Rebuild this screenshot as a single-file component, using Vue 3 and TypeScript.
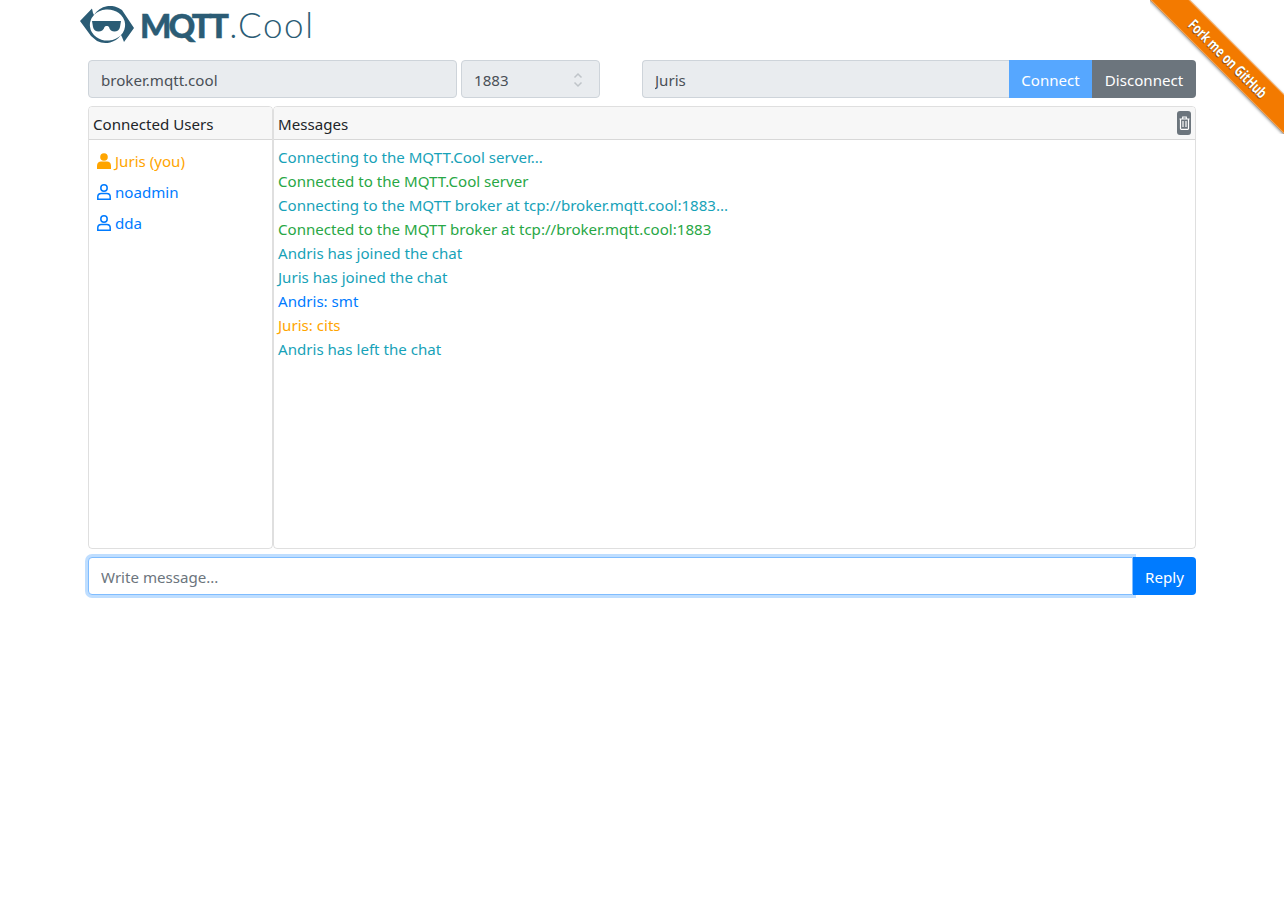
<script setup lang="ts">
interface Line { text: string; kind: string }
interface User { name: string; self: boolean }

const users: User[] = [
  { name: 'Juris (you)', self: true },
  { name: 'noadmin', self: false },
  { name: 'dda', self: false },
]
const lines: Line[] = [
  { text: 'Connecting to the MQTT.Cool server...', kind: 'info' },
  { text: 'Connected to the MQTT.Cool server', kind: 'ok' },
  { text: 'Connecting to the MQTT broker at tcp://broker.mqtt.cool:1883...', kind: 'info' },
  { text: 'Connected to the MQTT broker at tcp://broker.mqtt.cool:1883', kind: 'ok' },
  { text: 'Andris has joined the chat', kind: 'info' },
  { text: 'Juris has joined the chat', kind: 'info' },
  { text: 'Andris: smt', kind: 'other' },
  { text: 'Juris: cits', kind: 'self' },
  { text: 'Andris has left the chat', kind: 'info' },
]
</script>

<template>
  <div class="page">
    <header class="logo">
      <svg class="mark" width="56" height="40" viewBox="80 6 56 40" aria-hidden="true">
        <path fill="#2b5c75" d="M80 21 L92 8.500 L93 13 L94 15 A17.500 15.500 0 0 0 121 35 A19 19 0 0 1 97 41 L91 36 Z" />
        <path fill="#2b5c75" d="M134 28 L124 42 L122 37 L121 35 A17.500 15.500 0 0 0 94 15 A19 19 0 0 1 122 10 Z" />
        <path fill="#2b5c75" d="M92 21 H121 L120 27 C119 33 110 33 109 27 C108.500 25.500 105 25.500 104.500 27 C103 33 94 33 93 27 Z" />
      </svg>
      <span class="brand"><b>MQTT</b><i>.Cool</i></span>
    </header>

    <div class="connection">
      <input class="field host" disabled value="broker.mqtt.cool" />
      <div class="field port">
        <span>1883</span>
        <svg width="10" height="16" viewBox="0 0 10 16" aria-hidden="true">
          <path d="M1.500 5.500 L5 2 L8.500 5.500 M1.500 10.500 L5 14 L8.500 10.500" fill="none" stroke="#bfc4c9" stroke-width="1.500" />
        </svg>
      </div>
      <div class="who">
        <input class="field name" disabled value="Juris" />
        <button class="btn connect" disabled>Connect</button>
        <button class="btn disconnect">Disconnect</button>
      </div>
    </div>

    <div class="panels">
      <section class="card users">
        <div class="card-head"><span>Connected Users</span></div>
        <ul class="user-list">
          <li v-for="u in users" :key="u.name" :class="u.self ? 'me' : 'peer'">
            <svg width="14" height="16" viewBox="0 0 14 16" aria-hidden="true">
              <template v-if="u.self">
                <circle cx="7" cy="4" r="3.800" fill="currentColor" />
                <path d="M0 16 V12.500 C0 10 2 8.500 4 8.500 H10 C12 8.500 14 10 14 12.500 V16 Z" fill="currentColor" />
              </template>
              <template v-else>
                <circle cx="7" cy="4" r="3.200" fill="none" stroke="currentColor" stroke-width="1.500" />
                <path d="M.8 15.200 V12.800 C.8 10.800 2.200 9.400 4.200 9.400 H9.800 C11.800 9.400 13.200 10.800 13.200 12.800 V15.200 Z" fill="none" stroke="currentColor" stroke-width="1.500" />
              </template>
            </svg>
            <span>{{ u.name }}</span>
          </li>
        </ul>
      </section>

      <section class="card messages">
        <div class="card-head">
          <span>Messages</span>
          <button class="trash" aria-label="Clear">
            <svg width="11" height="14" viewBox="0 0 11 14" aria-hidden="true">
              <path d="M.5 3 H10.500 M3.700 3 V1 H7.300 V3 M1.500 3 V12.500 Q1.500 13.300 2.300 13.300 H8.700 Q9.500 13.300 9.500 12.500 V3 M4 5 V11 M7 5 V11" fill="none" stroke="#fff" stroke-width="1.200" />
            </svg>
          </button>
        </div>
        <div class="log">
          <div v-for="(l, i) in lines" :key="i" :class="l.kind">{{ l.text }}</div>
        </div>
      </section>
    </div>

    <div class="composer">
      <input class="message" placeholder="Write message..." />
      <button class="btn reply">Reply</button>
    </div>

    <div class="ribbon-wrap">
      <a class="ribbon"><span>Fork me on GitHub</span></a>
    </div>
  </div>
</template>

<style>
html, body { background: #fff; }
</style>

<style scoped>
.page {
  position: relative;
  width: 1284px;
  height: 920px;
  overflow: hidden;
  box-sizing: border-box;
  padding: 0 88px;
  font-family: "Noto Sans", "Open Sans", "Liberation Sans", sans-serif;
  font-size: 15.1px;
  color: #212529;
}
.logo {
  display: flex;
  align-items: center;
  height: 52px;
  margin-left: -8px;
  gap: 4px;
  box-sizing: border-box;
}
.mark { flex: none; }
.brand {
  font-family: Lato, sans-serif;
  font-size: 33px;
  line-height: 36px;
  color: #2b5c75;
  white-space: nowrap;
  margin-bottom: 4px;
}
.brand b {
  font-weight: 900;
  letter-spacing: -2.800px;
  -webkit-text-stroke: .5px #2b5c75;
}
.brand i {
  font-size: 35px;
  font-style: normal;
  font-weight: 300;
  letter-spacing: 1.600px;
  margin-left: 3px;
}

.connection {
  display: flex;
  height: 38px;
  margin-top: 8px;
  gap: 4px;
}
.field {
  box-sizing: border-box;
  height: 38px;
  padding: 1px 12px 0;
  border: 1px solid #ced4da;
  border-radius: 4px;
  background: #e9ecef;
  color: #495057;
  font: inherit;
  opacity: 1;
  -webkit-text-fill-color: #495057;
}
.host { width: 369px; }
.port {
  width: 139px;
  display: flex;
  align-items: center;
  justify-content: space-between;
  padding-right: 16px;
}
.who {
  display: flex;
  width: 554px;
  margin-left: 38px;
}
.name {
  width: 367px;
  border-top-right-radius: 0;
  border-bottom-right-radius: 0;
  border-right: 0;
}
.btn {
  box-sizing: border-box;
  height: 38px;
  border: 0;
  padding: 1px 0 0;
  color: #fff;
  font: inherit;
}
.connect {
  width: 83px;
  background: #56a7ff;
}
.disconnect {
  width: 104px;
  background: #6c757d;
  border-radius: 0 4px 4px 0;
}

.panels {
  display: flex;
  height: 443px;
  margin-top: 8px;
}
.card {
  box-sizing: border-box;
  border: 1px solid rgba(0, 0, 0, .125);
  border-radius: 4px;
  display: flex;
  flex-direction: column;
  min-width: 0;
}
.users { width: 185px; flex: none; }
.messages { flex: 1; }
.card-head {
  display: flex;
  align-items: center;
  justify-content: space-between;
  box-sizing: border-box;
  height: 33px;
  flex: none;
  padding: 0 4px;
  background: #f7f7f7;
  border-bottom: 1px solid rgba(0, 0, 0, .125);
  border-radius: 3px 3px 0 0;
  color: #212529;
}
.card-head > span { padding-top: 2px; }
.trash {
  display: flex;
  align-items: center;
  justify-content: center;
  width: 14px;
  height: 24px;
  padding: 0;
  border: 0;
  border-radius: 3px;
  background: #6c757d;
}
.user-list {
  list-style: none;
  margin: 0;
  padding: 5px 8px;
}
.user-list li {
  display: flex;
  align-items: center;
  gap: 4px;
  height: 31px;
}
.me { color: #ffa500; }
.peer { color: #007bff; }
.log {
  padding: 5px 4px;
  line-height: 24px;
}
.info { color: #17a2b8; }
.ok { color: #28a745; }
.other { color: #007bff; }
.self { color: #ffa500; }

.composer {
  display: flex;
  height: 38px;
  margin-top: 8px;
}
.message {
  box-sizing: border-box;
  flex: 1;
  min-width: 0;
  height: 38px;
  padding: 1px 12px 0;
  border: 1px solid #80bdff;
  border-radius: 4px 0 0 4px;
  box-shadow: 0 0 0 3px rgba(0, 123, 255, .25);
  color: #495057;
  font: inherit;
  outline: none;
}
.message::placeholder { color: #6c757d; opacity: 1; }
.reply {
  position: relative;
  width: 63px;
  background: #007bff;
  border-radius: 0 4px 4px 0;
}

.ribbon-wrap {
  position: absolute;
  top: 0;
  right: 0;
  width: 134px;
  height: 134px;
  overflow: hidden;
  pointer-events: none;
}
.ribbon {
  position: absolute;
  left: -32px;
  top: 44px;
  width: 220px;
  height: 28px;
  line-height: 28px;
  text-align: center;
  transform: rotate(45deg);
  background: #f37a00;
  box-shadow: inset 0 1px 0 #f9a85a, inset 0 -1px 0 #f9a85a, 0 1px 3px rgba(0, 0, 0, .45);
  color: #fff;
  font-size: 15px;
  font-weight: 700;
  text-shadow: 0 1px 1px rgba(0, 0, 0, .5);
}
.ribbon span {
  display: inline-block;
  transform: scaleX(.74);
}
</style>
